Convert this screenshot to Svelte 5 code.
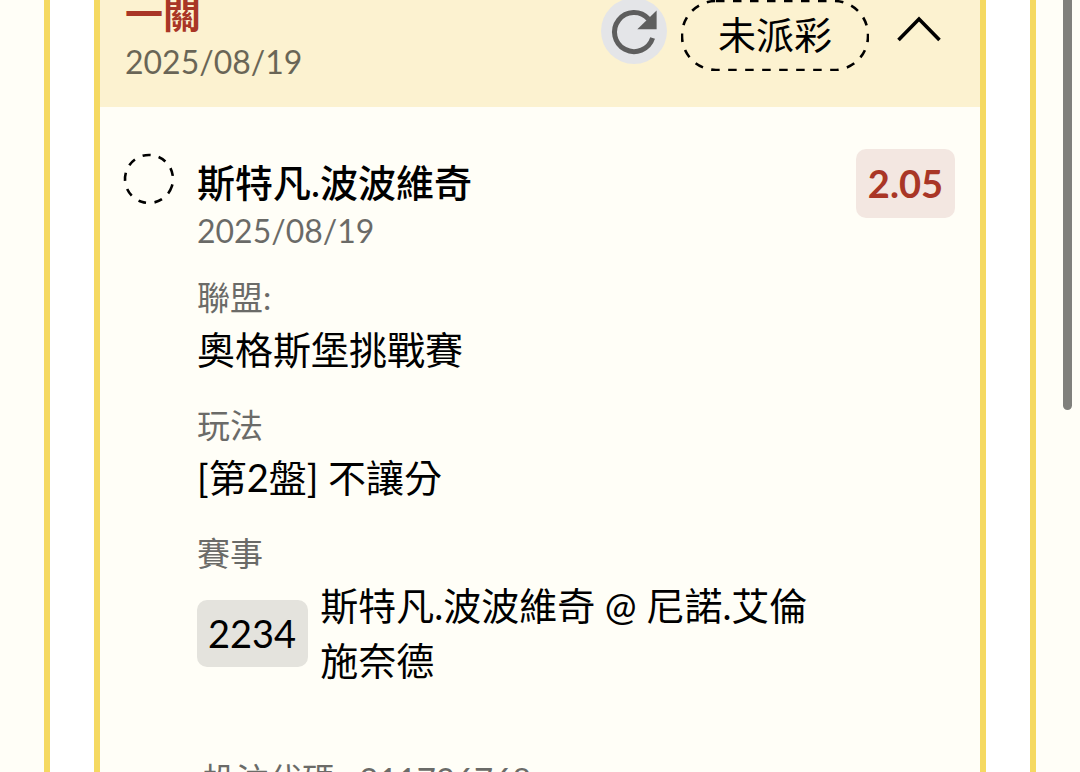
<script>
  const leg = {
    name: '斯特凡.波波維奇',
    date: '2025/08/19',
    odds: '2.05',
    code: '2234',
    match: '斯特凡.波波維奇 @ 尼諾.艾倫施奈德'
  };
  let open = $state(true);
</script>

<main class="page">
  <section class="panel">
    <article class="ticket">
      <header class="head">
        <div class="titles">
          <h1>一關</h1>
          <time class="date">2025/08/19</time>
        </div>
        <div class="actions">
          <button class="refresh" aria-label="重新整理">
            <svg viewBox="0 0 66 66" aria-hidden="true">
              <path d="M51.6 40 A19.5 19.5 0 1 1 47.5 21" fill="none" stroke="#5e5e5e" stroke-width="5" />
              <path d="M55.6 12.5 V31.3 H36.3 Z" fill="#5e5e5e" />
            </svg>
          </button>
          <span class="status">
            <svg aria-hidden="true">
              <rect class="outline" x="1" y="1" rx="34" ry="34" />
            </svg>
            未派彩
          </span>
          <button class="toggle" aria-label="收合" aria-expanded={open} onclick={() => (open = !open)}>
            <svg viewBox="0 0 44 28" aria-hidden="true">
              <path d="M1.5 25 L22 4 L42.5 25" fill="none" stroke="#000" stroke-width="3.6" />
            </svg>
          </button>
        </div>
      </header>

      {#if open}
        <div class="body">
          <svg class="ring" viewBox="0 0 52 52" aria-hidden="true">
            <circle cx="26" cy="26" r="24" fill="none" stroke="#000" stroke-width="2.6" stroke-dasharray="8 8.4" transform="rotate(18 26 26)" />
          </svg>
          <div class="leg">
            <h2>{leg.name}</h2>
            <time class="date">{leg.date}</time>
            <dl>
              <dt>聯盟:</dt>
              <dd>奧格斯堡挑戰賽</dd>
              <dt>玩法</dt>
              <dd>[第2盤] 不讓分</dd>
              <dt>賽事</dt>
              <dd class="match">
                <span class="code">{leg.code}</span>
                <span>{leg.match}</span>
              </dd>
            </dl>
            <p class="serial"><span>投注代碼:</span><span>211736768</span></p>
          </div>
          <strong class="odds">{leg.odds}</strong>
        </div>
      {/if}
    </article>
  </section>
  <div class="thumb"></div>
</main>

<style>
  :global(body) {
    overflow: hidden;
    background: #fffef7;
  }
  .page {
    padding: 0 44px;
    font-family: Lato, 'Noto Sans CJK TC', sans-serif;
    font-size: 38px;
    line-height: 55px;
    color: #000;
  }
  .panel {
    padding: 0 44px;
    border: solid #f5d961;
    border-width: 0 6px;
    background: #fff;
  }
  .ticket {
    min-height: calc(100vh + 12px);
    border: solid #f5d961;
    border-width: 0 6px;
    background: #fffef7;
  }
  h1, h2, dl, dd, p { margin: 0; }
  button {
    flex: none;
    padding: 0;
    border: 0;
    background: none;
    cursor: pointer;
  }
  svg { display: block; }
  .head {
    display: flex;
    justify-content: space-between;
    margin-top: -12px;
    padding: 0 39px 21px 25px;
    background: #fcf2d0;
  }
  h1 {
    font-size: 38px;
    line-height: 50px;
    font-weight: 700;
    color: #a93626;
  }
  .date {
    display: block;
    font-size: 32px;
    line-height: 48px;
    color: #000;
    opacity: 0.58;
  }
  .actions {
    display: flex;
    align-items: center;
    align-self: flex-start;
    gap: 14px;
    padding-top: 10px;
  }
  .refresh {
    width: 66px;
    height: 66px;
    margin-bottom: 8px;
    border-radius: 50%;
    background: #e4e5e8;
  }
  .status {
    position: relative;
    padding: 7px 37px 9px;
  }
  .status svg {
    position: absolute;
    inset: 0;
    width: 100%;
    height: 100%;
  }
  .outline {
    width: calc(100% - 2px);
    height: calc(100% - 2px);
    fill: none;
    stroke: #000;
    stroke-width: 2.6;
    stroke-dasharray: 8.5 8.5;
  }
  .toggle {
    width: 44px;
    height: 28px;
    margin: 0 0 12px 14px;
  }
  .body {
    display: flex;
    align-items: flex-start;
    gap: 22px;
    padding: 42px 25px 0 23px;
  }
  .ring {
    flex: none;
    width: 52px;
    height: 52px;
    margin-top: 4px;
  }
  .leg { flex: 1; min-width: 0; }
  h2 {
    font-size: 38px;
    line-height: 66px;
    font-weight: 500;
  }
  .leg .date { line-height: 32px; }
  dl { padding-top: 2px; }
  dt {
    margin-top: 23px;
    font-size: 33px;
    line-height: 50px;
    color: #6b6b68;
  }
  .match {
    display: flex;
    align-items: center;
    gap: 12px;
  }
  .code {
    padding: 6px 12px 6px 11px;
    border-radius: 10px;
    background: #e4e3dd;
  }
  .serial {
    display: flex;
    gap: 16px;
    margin-top: 66px;
    padding-left: 6px;
    font-size: 33px;
    line-height: 50px;
    color: #6b6b68;
  }
  .odds {
    padding: 7px 12px;
    border-radius: 10px;
    background: #f3e7e1;
    color: #a93626;
    font-weight: 700;
  }
  .thumb {
    position: fixed;
    top: -10px;
    right: 8px;
    width: 9px;
    height: 420px;
    border-radius: 5px;
    background: #80807c;
  }
</style>
